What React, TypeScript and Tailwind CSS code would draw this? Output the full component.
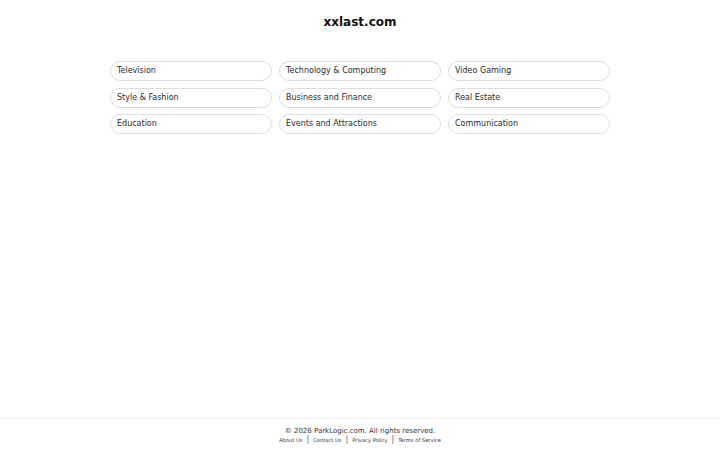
const CATEGORIES = [
  'Television',
  'Technology & Computing',
  'Video Gaming',
  'Style & Fashion',
  'Business and Finance',
  'Real Estate',
  'Education',
  'Events and Attractions',
  'Communication',
]

const LINKS = ['About Us', 'Contact Us', 'Privacy Policy', 'Terms of Service']

export default function App() {
  return (
    <div
      className="flex h-[450px] w-[720px] flex-col bg-white text-[#222]"
      style={{ fontFamily: '"DejaVu Sans", sans-serif' }}
    >
      <main className="flex-1">
        <h1 className="pt-[14px] text-center text-[12px] font-bold leading-[16px] text-[#111]">xxlast.com</h1>

        <div className="mx-auto mt-[31px] grid w-[500px] grid-cols-3 gap-x-[7px] gap-y-[6.5px]">
          {CATEGORIES.map((c) => (
            <a
              key={c}
              href="#"
              className="flex h-[20px] items-center rounded-full border border-[#dddddd] px-[6px] text-[8px] text-[#2a2a2a]"
            >
              {c}
            </a>
          ))}
        </div>
      </main>

      <footer className="h-[32px] border-t border-[#eeeeee] pt-[8px] text-center">
        <p className="text-[7px] leading-[9px] text-[#333]">© 2026 ParkLogic.com. All rights reserved.</p>
        <div className="flex items-center justify-center text-[5.2px] leading-[8px] text-[#333]">
          {LINKS.map((l, i) => (
            <span key={l} className="flex items-center">
              {i > 0 && <span className="mx-[4px] text-[8px] text-[#555]">|</span>}
              <a href="#">{l}</a>
            </span>
          ))}
        </div>
      </footer>
    </div>
  )
}
